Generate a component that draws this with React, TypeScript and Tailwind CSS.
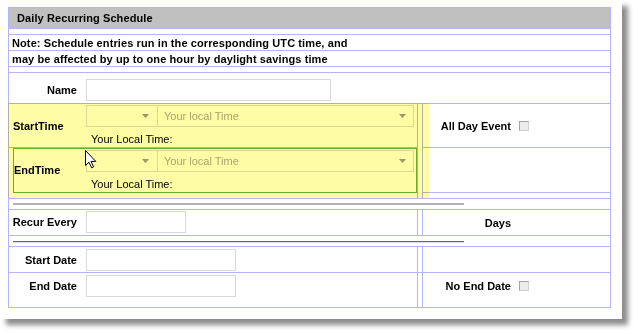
import React from 'react';

function Arrow() {
  return (
    <svg width="7" height="4" viewBox="0 0 7 4" className="block">
      <path d="M0 0 L7 0 L3.5 4 Z" fill="#9a9a9a" />
    </svg>
  );
}

function TimePicker() {
  return (
    <div className="flex h-[22px]">
      <div className="flex w-[72px] items-center justify-end border border-[#dcdcdc] pr-[8px]">
        <Arrow />
      </div>
      <div className="flex w-[256px] items-center justify-between border border-l-0 border-[#dcdcdc] pl-[6px] pr-[7px] text-[#a8a8a8]">
        <span>Your local Time</span>
        <Arrow />
      </div>
    </div>
  );
}

function CheckBox() {
  return <div className="ml-[8px] h-[10px] w-[10px] border border-[#a4a4a4] border-r-[#d0d0d0] border-b-[#d0d0d0] bg-[#ececec]" />;
}

export default function App() {
  return (
    <div className="relative h-[334px] w-[638px] overflow-hidden bg-white font-['Liberation_Sans',Arial,sans-serif] text-[11px] leading-[14px] text-black">
      <div className="h-[319px] w-[622px] bg-white pl-[8px] pt-[7px] shadow-[6px_6px_5px_rgba(0,0,0,0.45)]">
        <div className="w-[603px] border border-[#b3b3ff]">
          <div className="flex h-[21px] items-center border-b border-[#b3b3ff] bg-[#c0c0c0] pl-[8px] font-bold tracking-[0.1px]">
            Daily Recurring Schedule
          </div>
          <div className="h-[6px] border-b border-[#b3b3ff]" />
          <div className="flex h-[16px] items-center border-b border-[#b3b3ff] pl-[3px] font-bold tracking-[0.1px]">
            Note: Schedule entries run in the corresponding UTC time, and
          </div>
          <div className="flex h-[16px] items-center border-b border-[#b3b3ff] pl-[3px] font-bold tracking-[0.1px]">
            may be affected by up to one hour by daylight savings time
          </div>
          <div className="h-[6px] border-b border-[#b3b3ff]" />

          {/* name */}
          <div className="flex h-[31px] items-start border-b border-[#b3b3ff] pt-[6px]">
            <div className="w-[68px] text-right font-bold leading-[22px]">Name</div>
            <div className="ml-[9px] h-[22px] w-[245px] border border-[#d8d8d8]" />
          </div>

          {/* start / end time */}
          <div className="flex h-[95px] border-b border-[#b3b3ff]">
            <div className="w-[409px] border-r border-[#b3b3ff]">
              <div className="flex h-[44px] border-b border-[#b3b3ff]">
                <div className="flex w-[77px] items-center pl-[4px] font-bold">StartTime</div>
                <div className="pt-[1px]">
                  <TimePicker />
                  <div className="mt-[5px] pl-[5px]">Your Local Time:</div>
                </div>
              </div>
              <div className="ml-[4px] flex h-[45px] w-[404px] border border-[#6bb04a] pb-[1px]">
                <div className="flex w-[72px] items-center font-bold">EndTime</div>
                <div className="pt-[1px]">
                  <TimePicker />
                  <div className="mt-[5px] pl-[5px]">Your Local Time:</div>
                </div>
              </div>
            </div>
            <div className="w-[4px]" />
            <div className="flex-1 border-l border-[#b3b3ff]">
              <div className="flex h-[44px] items-center border-b border-[#b3b3ff]">
                <div className="w-[88px] text-right font-bold">All Day Event</div>
                <CheckBox />
              </div>
              <div className="h-[45px] border-b border-[#b3b3ff]" />
            </div>
          </div>

          <div className="h-[11px] border-b border-[#b3b3ff] pl-[4px] pt-[4px]">
            <div className="h-[2px] w-[451px] bg-[#b0b0b0]" />
          </div>

          {/* recur every */}
          <div className="flex h-[26px] border-b border-[#b3b3ff]">
            <div className="flex w-[409px] items-start border-r border-[#b3b3ff] pt-[1px]">
              <div className="w-[68px] text-right font-bold leading-[22px]">Recur Every</div>
              <div className="ml-[9px] h-[22px] w-[100px] border border-[#d8d8d8]" />
            </div>
            <div className="w-[4px]" />
            <div className="flex flex-1 items-center border-l border-[#b3b3ff]">
              <div className="w-[88px] text-right font-bold">Days</div>
            </div>
          </div>

          <div className="h-[11px] border-b border-[#b3b3ff] pl-[4px] pt-[5px]">
            <div className="h-[2px] w-[451px] border-t border-b border-t-[#666666] border-b-[#dedede]" />
          </div>

          {/* start date */}
          <div className="flex h-[26px] border-b border-[#b3b3ff]">
            <div className="flex w-[409px] items-start border-r border-[#b3b3ff] pt-[2px]">
              <div className="w-[68px] text-right font-bold leading-[22px]">Start Date</div>
              <div className="ml-[9px] h-[22px] w-[150px] border border-[#d8d8d8]" />
            </div>
            <div className="w-[4px]" />
            <div className="flex-1 border-l border-[#b3b3ff]" />
          </div>

          {/* end date */}
          <div className="flex h-[34px]">
            <div className="flex w-[409px] items-start border-r border-[#b3b3ff] pt-[2px]">
              <div className="w-[68px] text-right font-bold leading-[22px]">End Date</div>
              <div className="ml-[9px] h-[22px] w-[150px] border border-[#d8d8d8]" />
            </div>
            <div className="w-[4px]" />
            <div className="flex flex-1 items-start border-l border-[#b3b3ff] pt-[2px]">
              <div className="flex h-[22px] items-center">
                <div className="w-[88px] text-right font-bold">No End Date</div>
                <CheckBox />
              </div>
            </div>
          </div>
        </div>
      </div>

      {/* highlight marker */}
      <div className="pointer-events-none absolute left-[8px] top-[103px] h-[95px] w-[421px] bg-[#fffca6] mix-blend-multiply" />

      {/* mouse cursor */}
      <svg width="12" height="19" viewBox="0 0 12 19" className="pointer-events-none absolute left-[85px] top-[150px]">
        <path d="M0.5 0.5 L0.5 15.5 L4 12.2 L6.6 17.8 L8.6 16.9 L6 11.4 L10.8 11.4 Z" fill="#ffffff" stroke="#000000" strokeWidth="1" strokeLinejoin="round" />
      </svg>
    </div>
  );
}
